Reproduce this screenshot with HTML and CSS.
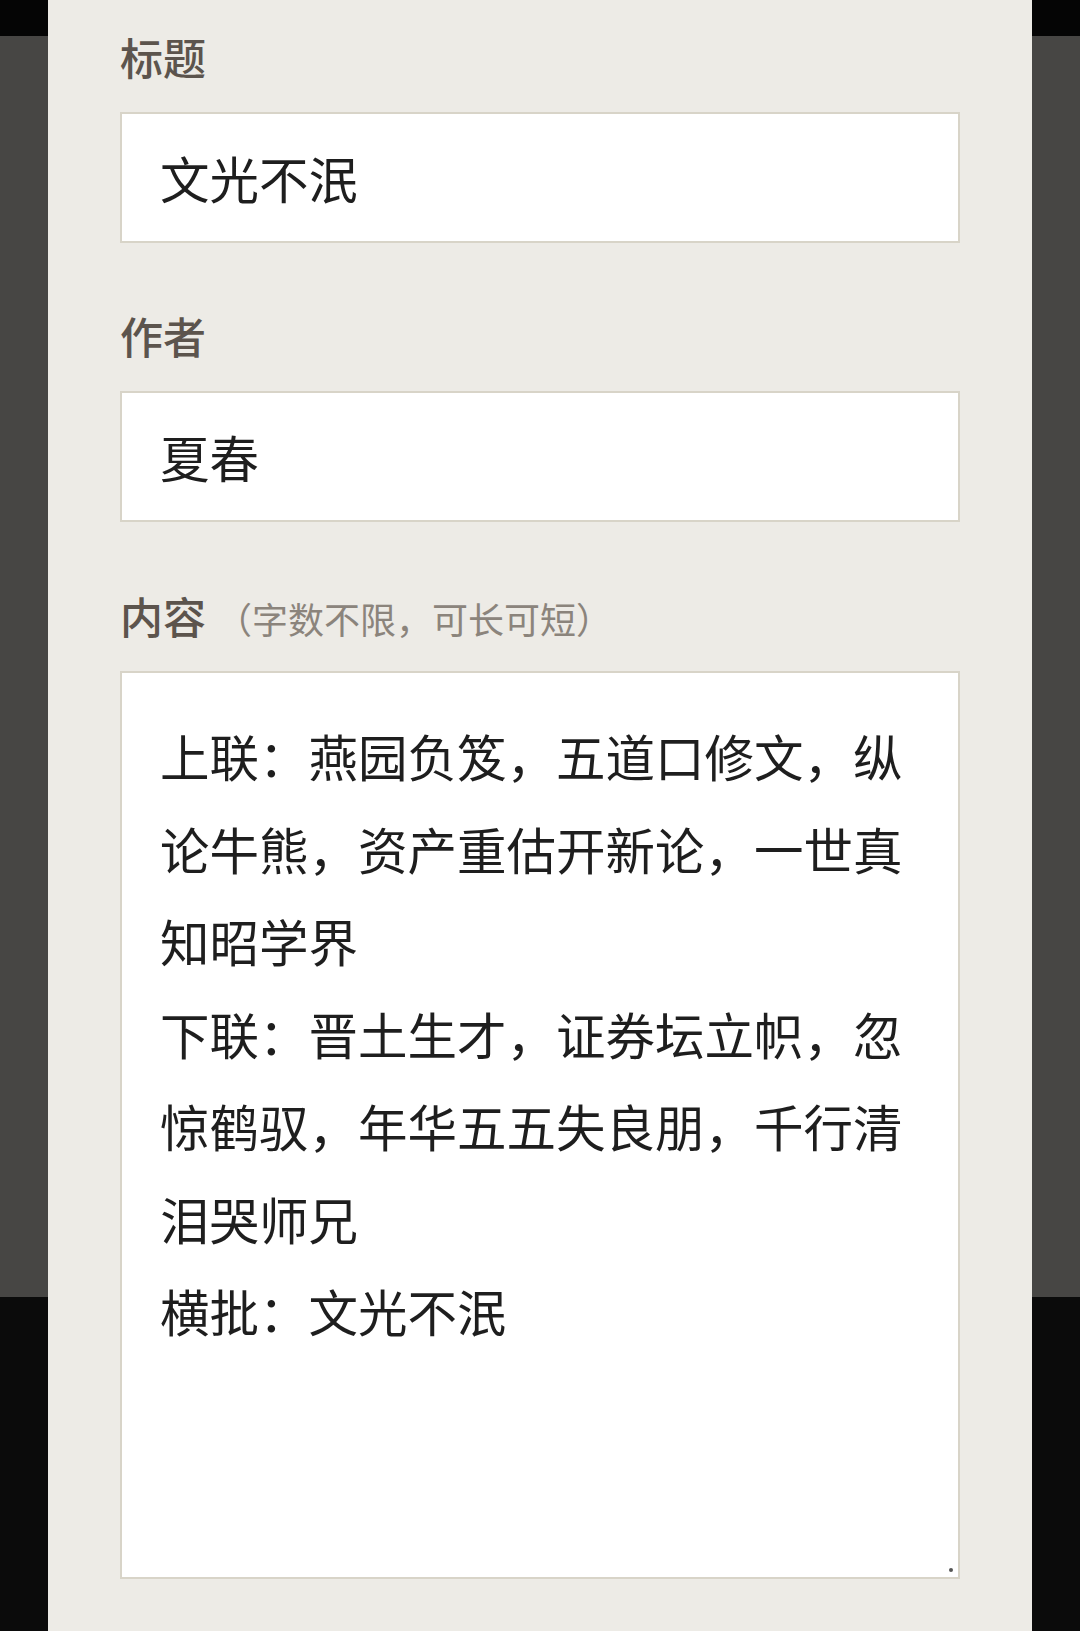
FILE: index.html
```html
<!DOCTYPE html>
<html lang="zh-CN">
<head>
<meta charset="utf-8">
<title>编辑</title>
<link rel="stylesheet" href="styles.css">
</head>
<body>
<main class="panel">
  <section class="field field-first">
    <label class="label" for="title">标题</label>
    <input class="input" id="title" type="text" value="文光不泯">
  </section>
  <section class="field">
    <label class="label" for="author">作者</label>
    <input class="input" id="author" type="text" value="夏春">
  </section>
  <section class="field">
    <label class="label" for="content">内容<span class="hint">（字数不限，可长可短）</span></label>
    <div class="area-wrap">
      <textarea class="area" id="content">上联：燕园负笈，五道口修文，纵论牛熊，资产重估开新论，一世真知昭学界
下联：晋土生才，证券坛立帜，忽惊鹤驭，年华五五失良朋，千行清泪哭师兄
横批：文光不泯</textarea>
      <span class="grip"></span>
    </div>
  </section>
</main>
</body>
</html>
```

FILE: styles.css
```css
html, body {
  margin: 0;
  padding: 0;
}

body {
  width: 1080px;
  height: 1631px;
  overflow: hidden;
  background: linear-gradient(to bottom,
    #050505 0, #050505 36px,
    #474644 36px, #474644 1297px,
    #0b0b0b 1297px, #0b0b0b 100%);
  font-family: "Noto Sans CJK SC", "Noto Sans", sans-serif;
}

.panel {
  margin: 0 48px;
  height: 1631px;
  box-sizing: border-box;
  background: #edebe6;
  padding: 29px 72px 0;
  display: flex;
  flex-direction: column;
}

.field {
  display: flex;
  flex-direction: column;
  margin-top: 65px;
}

.field-first {
  margin-top: 0;
}

.field:last-child {
  margin-top: 66px;
}

.label {
  display: flex;
  align-items: baseline;
  height: 56px;
  line-height: 54px;
  font-size: 43px;
  font-weight: 500;
  color: #5c544d;
  margin-bottom: 27px;
}

.hint {
  font-size: 36px;
  font-weight: 400;
  color: #8b847c;
  margin-left: 10px;
}

.input {
  box-sizing: border-box;
  width: 840px;
  height: 131px;
  margin: 0;
  border: 2px solid #d8d4c8;
  border-radius: 0;
  background: #ffffff;
  padding: 0 38px;
  font-family: "Noto Sans CJK SC", "Noto Sans", sans-serif;
  font-size: 49.5px;
  color: #1e1e1e;
  outline: none;
}

.area-wrap {
  position: relative;
  width: 840px;
  height: 908px;
}

.area {
  box-sizing: border-box;
  display: block;
  width: 840px;
  height: 908px;
  margin: 0;
  border: 2px solid #d8d4c8;
  border-radius: 0;
  background: #ffffff;
  padding: 37px 38px;
  font-family: "Noto Sans CJK SC", "Noto Sans", sans-serif;
  font-size: 49.5px;
  line-height: 92.5px;
  color: #1e1e1e;
  resize: none;
  overflow: hidden;
  outline: none;
}

.grip {
  position: absolute;
  right: 7px;
  bottom: 7px;
  width: 4px;
  height: 4px;
  border-radius: 50%;
  background: #555;
}
```
